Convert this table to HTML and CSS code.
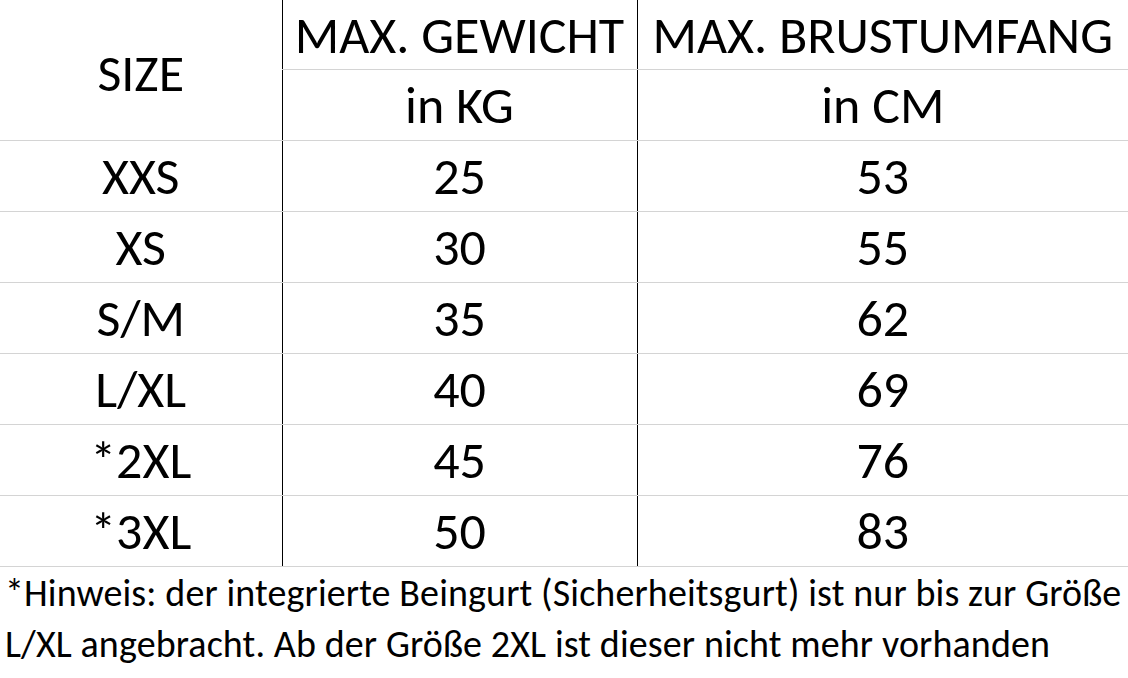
FILE: index.html
```html
<!DOCTYPE html>
<html lang="de">
<head>
<meta charset="utf-8">
<link rel="stylesheet" href="styles.css">
</head>
<body>
<table class="sizes">
  <colgroup>
    <col class="c1"><col class="c2"><col class="c3">
  </colgroup>
  <tr class="h1">
    <td rowspan="2" class="size">SIZE</td>
    <td class="mid">MAX. GEWICHT</td>
    <td class="last">MAX. BRUSTUMFANG</td>
  </tr>
  <tr class="h2">
    <td class="mid">in KG</td>
    <td class="last">in CM</td>
  </tr>
  <tr><td>XXS</td><td class="mid">25</td><td class="last">53</td></tr>
  <tr><td>XS</td><td class="mid">30</td><td class="last">55</td></tr>
  <tr><td>S/M</td><td class="mid">35</td><td class="last">62</td></tr>
  <tr><td>L/XL</td><td class="mid">40</td><td class="last">69</td></tr>
  <tr><td>*2XL</td><td class="mid">45</td><td class="last">76</td></tr>
  <tr><td>*3XL</td><td class="mid">50</td><td class="last">83</td></tr>
</table>
<p class="note">*Hinweis: der integrierte Beingurt (Sicherheitsgurt) ist nur bis zur Größe<br>L/XL angebracht. Ab der Größe 2XL ist dieser nicht mehr vorhanden</p>
</body>
</html>
```
FILE: styles.css
```css
html, body {
  margin: 0;
  padding: 0;
  background: #fff;
}
body {
  width: 1128px;
  height: 678px;
  overflow: hidden;
  font-family: "Carlito", "Lato", "Liberation Sans", sans-serif;
  color: #000;
}
.sizes {
  border-collapse: collapse;
  width: 1128px;
  table-layout: fixed;
}
.c1 { width: 282px; }
.c2 { width: 355px; }
.c3 { width: 491px; }
.sizes td {
  padding: 0;
  height: 70px;
  text-align: center;
  vertical-align: middle;
  font-size: 52px;
  line-height: 1;
  border-top: 1px solid #d4d4d4;
  border-bottom: 1px solid #d4d4d4;
  white-space: nowrap;
}
.sizes tr.h1 td {
  border-top: none;
  height: 69px;
}
.sizes td.size {
  padding-top: 6px;
}
.sizes td.mid {
  border-left: 1px solid #000;
  border-right: 1px solid #000;
}
.note {
  margin: 0;
  padding: 1px 0 0 5px;
  font-size: 38px;
  letter-spacing: 0.12px;
  line-height: 51px;
  white-space: nowrap;
}
```
